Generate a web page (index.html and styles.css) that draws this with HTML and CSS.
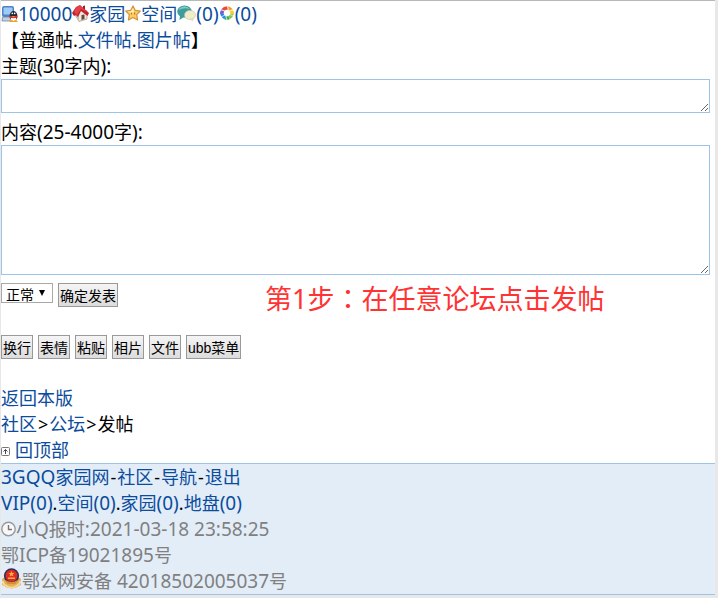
FILE: index.html
```html
<!DOCTYPE html>
<html lang="zh-CN">
<head>
  <meta charset="UTF-8">
  <title>发帖</title>
  <meta name="viewport" content="width=device-width, initial-scale=1.0">
  <link rel="stylesheet" href="styles.css">
</head>
<body>

<div class="page" id="top">
  <div class="line">
    <svg class="icon i17" viewBox="0 0 17 17"><rect x="1" y="1" width="12" height="11" rx="2" fill="#4f83c8"/><rect x="2.500" y="2.500" width="9" height="7" rx="1" fill="#9dcdf6"/><path d="M1.500 12h9v4H1z" fill="#c3d0e0" stroke="#6f86a5" stroke-width=".8"/><ellipse cx="12.500" cy="11" rx="3.900" ry="5" fill="#252b35"/><ellipse cx="12.500" cy="13.500" rx="2.600" ry="2.600" fill="#fff"/><path d="M8.500 10.500q4 2 8 0v2q-4 1.500-8 0z" fill="#e13420"/><path d="M8.500 16q2-2 4 0q2-2 4 0v1h-8z" fill="#f3a222"/><circle cx="11.300" cy="8.400" r=".8" fill="#fff"/><circle cx="13.700" cy="8.400" r=".8" fill="#fff"/></svg><a href="#"><span class="num">10000</span></a><svg class="icon i17" viewBox="0 0 17 17"><path d="M2 8l5 8.500 8-2.500V6L9 4z" fill="#efe8dc" stroke="#8c7c70" stroke-width=".6"/><path d="M2 8l5 8.500V11L5 6z" fill="#c9bfb2"/><path d="M11 1l2-.5V5l-2-1z" fill="#a81d24"/><path d="M0 8l4-6 4-2 9 8-1.500 3L9 6l-3 6-2-2-2 1z" fill="#c4202a"/><path d="M4 2.500L8 .5l8 7.500-7-4-4 6-3-3z" fill="#e2444a"/><path d="M9.500 10l3-.5v4.500l-3 1z" fill="#69483c"/></svg><a href="#">家园</a><svg class="icon i16" viewBox="0 0 16 16"><path d="M8 1l2.200 4.300 5.100.7-3.600 3.600.9 5.400L8 12.500 3.400 15l.9-5.400L.7 6l5.100-.7z" fill="#ffce60" stroke="#d3913b" stroke-width="1.200" stroke-linejoin="round"/><path d="M8 3l1 3.500-3.500 3L5 7.500 2.500 6.800 6 6.300z" fill="#fff0b8"/><path d="M6.300 7.500v2M9.700 7.500v2" stroke="#a85b1c"/></svg><a href="#">空间</a><svg class="icon i19" viewBox="0 0 19 17"><ellipse cx="7.500" cy="6.500" rx="7.300" ry="6" fill="#3f9c9c"/><path d="M3 10l-.5 5L7 12z" fill="#3f9c9c"/><path d="M1.500 5q2-4 7-3.500 3 .5 4.500 3-5-2.500-11.500.5z" fill="#85c9c4"/><ellipse cx="13" cy="10" rx="5.500" ry="4.600" fill="#f0edcc" stroke="#c4c49a" stroke-width=".6"/><path d="M13 14l3 2.500.5-4z" fill="#dddbb9"/></svg><a href="#"><span class="num">(0)</span></a><svg class="icon i16" viewBox="0 0 16 16"><g fill="none" stroke-width="3.600"><path d="M8 3a5 5 0 0 1 4 2" stroke="#f79432"/><path d="M12 5a5 5 0 0 1 1 4" stroke="#f6cf32"/><path d="M13 9a5 5 0 0 1-3 3.600" stroke="#8cc63f"/><path d="M10 12.600a5 5 0 0 1-4 0" stroke="#36ad68"/><path d="M6 12.600A5 5 0 0 1 3 9" stroke="#2787e2"/><path d="M3 9a5 5 0 0 1 1-4" stroke="#7c58d0"/><path d="M4 5a5 5 0 0 1 4-2" stroke="#eb493c"/></g><path d="M8 1l2 4M14 5l-4 1M14 11l-4-2M8 15l-1-4M2 12l4-2M2 5l4 1" stroke="#fff" stroke-width=".7"/></svg><a href="#"><span class="num">(0)</span></a>
  </div>
  <div class="line">【普通帖.<a href="#">文件帖</a>.<a href="#">图片帖</a>】</div>

  <form onsubmit="return false">
    <label class="line" for="title">主题<span class="num">(30</span>字内<span class="num">):</span></label>
    <textarea id="title" class="title"></textarea>
    <label class="line" for="content">内容<span class="num">(25-4000</span>字<span class="num">):</span></label>
    <textarea id="content" class="content"></textarea>

    <div class="submit">
      <span class="select">
        <select aria-label="类型"><option>正常</option></select>
        <svg class="arrow" viewBox="0 0 6 6"><path d="M0 0h6L3 6z"/></svg>
      </span>
      <button type="submit">确定发表</button>
      <span class="tip">第1步<span class="colon" lang="zh-TW">：</span>在任意论坛点击发帖</span>
    </div>

    <div class="tools">
      <button type="button">换行</button>
      <button type="button">表情</button>
      <button type="button">粘贴</button>
      <button type="button">相片</button>
      <button type="button">文件</button>
      <button type="button">ubb菜单</button>
    </div>
  </form>

  <div class="line"><a href="#">返回本版</a></div>
  <div class="line"><a href="#">社区</a><span class="sep">&gt;</span><a href="#">公坛</a><span class="sep">&gt;</span>发帖</div>
  <div class="line">
    <svg class="icon up" viewBox="0 0 9 9"><rect x=".5" y=".5" width="8" height="8" rx="1" fill="#fff" stroke="#777"/><path d="M4.500 7V2.500M2.500 4.500l2-2 2 2" fill="none" stroke="#444"/></svg><a href="#top">回顶部</a>
  </div>

  <footer>
    <div class="line"><a href="#"><span class="num">3GQQ</span>家园网</a><span class="sep">-</span><a href="#">社区</a><span class="sep">-</span><a href="#">导航</a><span class="sep">-</span><a href="#">退出</a></div>
    <div class="line"><a href="#"><span class="num">VIP(0)</span></a>.<a href="#">空间<span class="num">(0)</span></a>.<a href="#">家园<span class="num">(0)</span></a>.<a href="#">地盘<span class="num">(0)</span></a></div>
    <div class="line grey">
      <svg class="icon clock" viewBox="0 0 15 16"><circle cx="7.500" cy="8" r="6.700" fill="#f8f8f8" stroke="#999" stroke-width="1.400"/><path d="M7.500 4v4.500H11" fill="none" stroke="#777" stroke-width="1.400"/></svg>小<span class="num">Q</span>报时<span class="num">:2021-03-18 23:58:25</span>
    </div>
    <div class="line grey">鄂<span class="num">ICP</span>备<span class="num">19021895</span>号</div>
    <div class="line grey">
      <svg class="icon police" viewBox="0 0 21 21"><path d="M2 10q-2 2 0 4l-1 3 5 2.500 4.500 1 4.500-1 5-2.500-1-3q2-2 0-4z" fill="#e3ad55"/><path d="M2 12l2 4 4.500 2.500h4L17 16l2-4v5l-6 3H8l-6-3z" fill="#f7d98f"/><circle cx="10.500" cy="7.800" r="7.600" fill="#2d3058"/><circle cx="10.500" cy="7.800" r="6" fill="#e02b20"/><path d="M10.500 3l.9 1.900 2.100.2-1.600 1.400.5 2-1.900-1-1.900 1 .5-2-1.600-1.400 2.100-.2zM7 9.500h7V11H7z" fill="#f6a845"/><path d="M4.500 12q6 4 12 0l-2 4h-8z" fill="#d88b3c"/></svg>鄂公网安备<span class="num"> 42018502005037</span>号
    </div>
  </footer>
</div>

</body>
</html>
```
FILE: styles.css
```css
body {
  margin: 0;
  padding: 0 3px 2px 1px;
  background: #e8e8e8;
  color: #000;
  font-family: "Noto Sans", "Noto Sans CJK SC", sans-serif;
  font-size: 18px;
  line-height: 26px;
}
.page {
  background: #fff;
  border-top: 1px solid #b8b8b8;
}
a {
  color: #0b4c9c;
  text-decoration: none;
}
.line {
  display: flex;
  align-items: center;
  height: 26px;
  white-space: nowrap;
}
.num {
  font-size: 19px;
  white-space: pre;
}
.sep {
  padding: 0 1px;
}
.icon {
  flex: none;
  height: 17px;
}
.i16, .i17, .i19 {
  margin-bottom: 2px;
}
.i16 {
  width: 16px;
  height: 16px;
}
.i17 {
  width: 17px;
}
.i19 {
  width: 19px;
}
.up {
  width: 9px;
  height: 9px;
  margin: 2px 5px 0 0;
}
.clock {
  width: 15px;
  height: 16px;
}
.police {
  width: 21px;
  height: 21px;
  margin-bottom: 5px;
}
textarea {
  display: block;
  box-sizing: border-box;
  width: calc(100% - 5px);
  margin: 0;
  padding: 2px;
  border: 1px solid #9dc3e8;
  background: #fff;
  font: inherit;
}
.title {
  height: 34px;
  margin-bottom: 6px;
}
.content {
  height: 130px;
  margin-bottom: 8px;
}
.submit, .tools {
  display: flex;
  gap: 5px;
  align-items: flex-start;
}
.submit {
  position: relative;
  margin-bottom: 28px;
}
.tools {
  margin-bottom: 26px;
}
button, select {
  box-sizing: border-box;
  margin: 0;
  color: #000;
  font-family: "Liberation Sans", "Noto Sans CJK SC", sans-serif;
  font-size: 14px;
}
button {
  height: 24px;
  padding: 2px 1px 0;
  border: 1px solid #999;
  background: linear-gradient(#f5f5f5, #dcdcdc);
  line-height: 20px;
}
.select {
  position: relative;
  display: flex;
}
select {
  appearance: none;
  width: 52px;
  height: 20px;
  padding: 3px 4px 0;
  border: 1px solid #a9a9a9;
  border-radius: 0;
  background: #fff;
}
.arrow {
  position: absolute;
  top: 7px;
  right: 8px;
  width: 6px;
  height: 6px;
  pointer-events: none;
}
.tip {
  position: absolute;
  top: 0;
  left: 264px;
  color: #ff3333;
  font-size: 27px;
  line-height: 30px;
  white-space: nowrap;
}
.colon {
  font-family: "Noto Sans CJK TC", sans-serif;
}
footer {
  border-top: 1px solid #9dc3e8;
  border-bottom: 1px solid #9dc3e8;
  background: #e3edf8;
}
.grey {
  color: #808080;
}
```
